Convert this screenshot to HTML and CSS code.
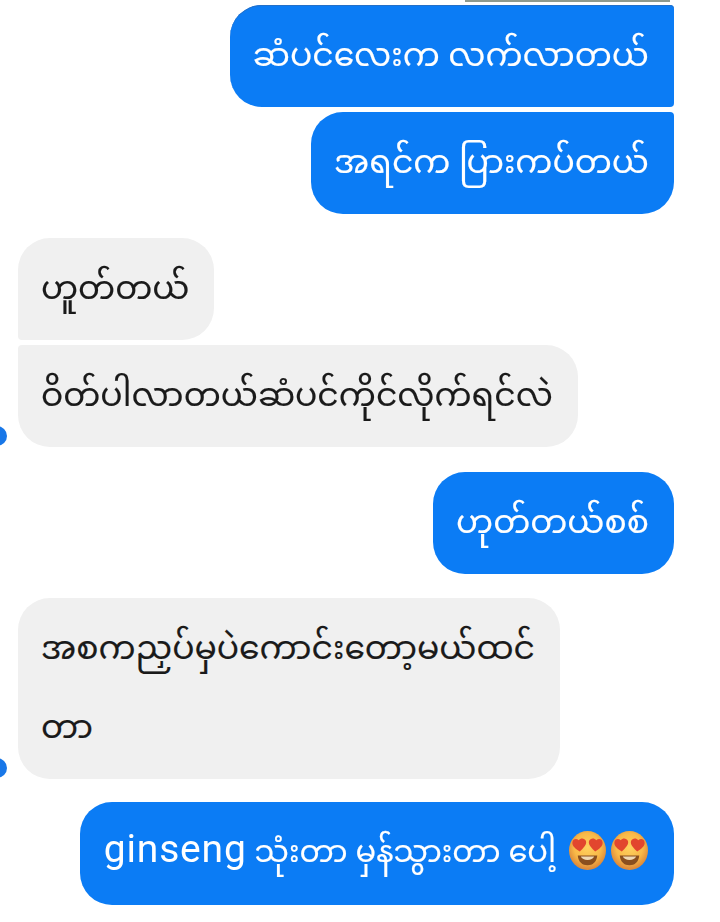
FILE: index.html
```html
<!DOCTYPE html>
<html lang="my">
<head>
<meta charset="utf-8">
<title>Chat</title>
<link rel="stylesheet" href="styles.css">
</head>
<body>
<svg class="defs" width="0" height="0" aria-hidden="true">
  <defs>
    <radialGradient id="face" cx="50%" cy="42%" r="55%">
      <stop offset="0" stop-color="#ffd25f"/>
      <stop offset="0.65" stop-color="#f9b948"/>
      <stop offset="1" stop-color="#dd8a3a"/>
    </radialGradient>
    <symbol id="heart-eyes" viewBox="0 0 36 36" preserveAspectRatio="none">
      <circle cx="18" cy="18" r="18" fill="url(#face)"/>
      <path d="M8.500 22.500h19c-.6 6-4.400 9-9.500 9s-8.900-3-9.500-9z" fill="#8a4f1e"/>
      <path d="M11.500 23.500h13c-1 2-3.400 3.200-6.500 3.200s-5.500-1.200-6.500-3.200z" fill="#efd9b4"/>
      <path d="M10.500 19C6.500 16.300 2.800 14 3.300 10.300c.4-2.900 3.900-3.900 6.200-1.700 1.800-2.700 5.900-2.200 7 .7 1.100 3.300-2.500 6.500-6 9.700z" fill="#e2462e"/>
      <path d="M25.500 19c4-2.700 7.700-5 7.200-8.700-.4-2.900-3.900-3.900-6.200-1.700-1.800-2.700-5.900-2.200-7 .7-1.100 3.300 2.500 6.500 6 9.700z" fill="#e2462e"/>
    </symbol>
  </defs>
</svg>
<main class="chat">
  <div class="group">
    <div class="prev-edge"></div>
    <p class="bubble sent first-out">ဆံပင်လေးက လက်လာတယ်</p>
    <p class="bubble sent last-out">အရင်က ပြားကပ်တယ်</p>
  </div>
  <div class="group">
    <p class="bubble recv first-in">ဟူတ်တယ်</p>
    <div class="with-dot">
      <p class="bubble recv last-in">ဝိတ်ပါလာတယ်ဆံပင်ကိုင်လိုက်ရင်လဲ</p>
      <span class="dot"></span>
    </div>
  </div>
  <div class="group group-nudge-down">
    <p class="bubble sent">ဟုတ်တယ်စစ်</p>
  </div>
  <div class="group">
    <div class="with-dot">
      <p class="bubble recv">အစကညှပ်မှပဲကောင်းတော့မယ်ထင်<br>တာ</p>
      <span class="dot"></span>
    </div>
  </div>
  <div class="group group-nudge-up">
    <p class="bubble sent last-msg"><span class="latin">ginseng</span> သုံးတာ မှန်သွားတာ ပေါ့ <span class="emojis"><svg class="emoji" viewBox="0 0 36 36" preserveAspectRatio="none"><use href="#heart-eyes"/></svg><svg class="emoji" viewBox="0 0 36 36" preserveAspectRatio="none"><use href="#heart-eyes"/></svg></span></p>
  </div>
</main>
</body>
</html>
```
FILE: styles.css
```css
html, body { margin: 0; background: #fff; }
body {
  overflow: hidden;
  font-family: "Noto Sans Myanmar", "Padauk", Roboto, "Noto Sans", sans-serif;
  font-size: 33px;
  line-height: 79px;
}
.defs { position: absolute; }
.chat {
  display: flex;
  flex-direction: column;
  gap: 24px;
  padding: 0 46px 0 18px;
  filter: blur(0.5px);
}
.group { display: flex; flex-direction: column; gap: 5px; }
.group:nth-child(odd) { align-items: flex-end; }
.group:nth-child(even) { align-items: flex-start; }
.group-nudge-down { margin-top: 1px; }
.group-nudge-up { margin-top: -1px; }
.prev-edge {
  width: 205px;
  height: 2px;
  margin-right: 4px;
  background: #8f9a8e;
}
.bubble {
  margin: 0;
  padding: 14px 25px 9px 23px;
  border-radius: 32px;
  white-space: nowrap;
  -webkit-text-stroke: 0.15px currentColor;
}
.sent { background: #0b7cf5; color: #fff; }
.recv { background: #f0f0f0; color: #1a1a1a; }
.bubble.first-out {
  margin-top: -2px;
  border-top-right-radius: 4px;
  border-bottom-right-radius: 4px;
  box-shadow: inset 0 1px 0 #2470c8;
}
.last-out { border-top-right-radius: 4px; }
.first-in { border-bottom-left-radius: 4px; }
.last-in { border-top-left-radius: 4px; }
.with-dot { position: relative; }
.dot {
  position: absolute;
  left: -31px;
  bottom: 1px;
  width: 20px;
  height: 20px;
  border-radius: 50%;
  background: #1877e8;
}
.last-msg { font-size: 30.5px; padding: 14px 26px 10px 24px; }
.latin {
  font-family: Roboto, sans-serif;
  font-size: 39px;
  line-height: 0;
  letter-spacing: 0.8px;
  -webkit-text-stroke: 0;
}
.emojis { display: inline-flex; gap: 5px; vertical-align: -8px; margin-left: 5px; line-height: 0; }
.emoji { width: 37px; height: 39px; filter: blur(0.6px); }
```
